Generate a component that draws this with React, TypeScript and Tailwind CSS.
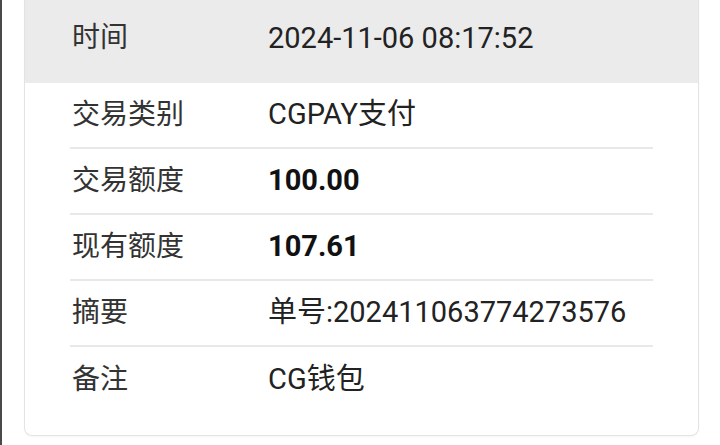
import React from "react";

type Row = {
    label: string;
    value: string;
    bold?: boolean;
};

const rows: Row[] = [
    { label: "交易类别", value: "CGPAY支付" },
    { label: "交易额度", value: "100.00", bold: true },
    { label: "现有额度", value: "107.61", bold: true },
    { label: "摘要", value: "单号:202411063774273576" },
    { label: "备注", value: "CG钱包" },
];

const App: React.FC = () => {
    return (
        <div
            className="w-[720px] h-[445px] overflow-hidden bg-white border-l-2 border-[#4a4a4a]"
            style={{ fontFamily: 'Roboto, "Noto Sans CJK SC", sans-serif' }}
        >
            <div className="ml-[22px] w-[675px] border-x border-b border-[#e3e3e3] rounded-b-lg pb-[22px] shadow-[0_1px_2px_rgba(0,0,0,0.04)]">
                {/* 头部 */}
                <div className="flex h-[83px] pt-[18px] bg-[#ebebeb] leading-[40px] text-[#333]">
                    <div className="w-[196px] pl-[47px] box-content text-[28px]">时间</div>
                    <div className="text-[29px] text-[#222]">2024-11-06 08:17:52</div>
                </div>

                <div className="ml-[45px] mr-[45px]">
                    {rows.map((row, index) => (
                        <div
                            key={index}
                            className={`flex items-center h-[66px] ${index !== rows.length - 1 ? "border-b-2 border-[#e8e8e8]" : ""}`}
                        >
                            <div className="w-[198px] pl-[2px] text-[28px] text-[#333]">{row.label}</div>
                            <div className={`text-[29px] ${row.bold ? "font-bold text-[#111]" : "text-[#222]"}`}>
                                {row.value}
                            </div>
                        </div>
                    ))}
                </div>
            </div>
        </div>
    );
};

export default App;
